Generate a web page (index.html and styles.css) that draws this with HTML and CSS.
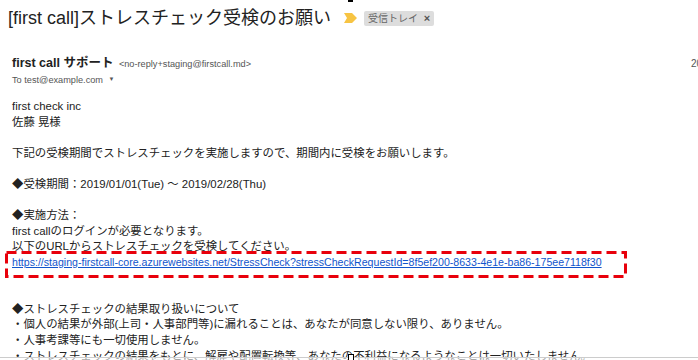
FILE: index.html
```html
<!DOCTYPE html>
<html lang="ja">
<head>
  <meta charset="UTF-8" />
  <title>[first call]ストレスチェック受検のお願い</title>
  <link rel="stylesheet" href="styles.css">
</head>
<body>
  <span class="cursor-top"></span>

  <div class="subject">
    <h1>[first call]ストレスチェック受検のお願い</h1>
    <svg class="marker" width="13" height="10" viewBox="0 0 13 10">
      <polygon points="0,0 8,0 13,5 8,10 0,10 3,5" fill="#f7c443" />
    </svg>
    <span class="label">受信トレイ <b>×</b></span>
  </div>

  <div class="meta">
    <div class="from">
      <span class="name">first call サポート</span>
      <span class="addr">&lt;no-reply+staging@firstcall.md&gt;</span>
    </div>
    <span class="date">2019/01/01 10:00</span>
  </div>
  <div class="to">To test@example.com <span class="caret">▼</span></div>

  <div class="body">
    first check inc<br />
    佐藤 晃様<br />
    <br />
    下記の受検期間でストレスチェックを実施しますので、期間内に受検をお願いします。<br />
    <br />
    ◆受検期間：2019/01/01(Tue) 〜 2019/02/28(Thu)<br />
    <br />
    ◆実施方法：<br />
    first callのログインが必要となります。<br />
    以下のURLからストレスチェックを受検してください。<br />
    <span class="link-line">
      <a href="#">https://staging-firstcall-core.azurewebsites.net/StressCheck?stressCheckRequestId=8f5ef200-8633-4e1e-ba86-175ee7118f30</a>
      <svg class="mark" width="622" height="27" viewBox="0 0 622 27">
        <rect x="1.5" y="1.5" width="619" height="24" fill="none" stroke="#e8000b" stroke-width="3" stroke-dasharray="10 5" />
      </svg>
    </span><br />
    <br />
    <br />
    ◆ストレスチェックの結果取り扱いについて<br />
    ・個人の結果が外部(上司・人事部門等)に漏れることは、あなたが同意しない限り、ありません。<br />
    ・人事考課等にも一切使用しません。<br />
    ・ストレスチェックの結果をもとに、解雇や配置転換等、あなたの不利益になるようなことは一切いたしません。
  </div>

  <div class="fade"></div>
  <span class="cursor-bottom"></span>
</body>
</html>
```

FILE: styles.css
```css
body {
  margin: 0;
  font-family: "Liberation Sans", "Noto Sans CJK JP", sans-serif;
  color: #222;
  background: #fff;
  overflow: hidden;
  height: 360px;
  position: relative;
}
.subject {
  display: flex;
  align-items: center;
  padding: 6px 0 0 8px;
}
h1 {
  margin: 0;
  font-size: 18px;
  font-weight: normal;
  line-height: 24px;
  white-space: nowrap;
}
.marker {
  margin-left: 13px;
}
.label {
  margin-left: 7px;
  background: #ddd;
  color: #666;
  font-size: 10px;
  line-height: 14px;
  padding: 0 4px;
  border-radius: 2px;
}
.label b {
  font-size: 11px;
  margin-left: 3px;
  color: #555;
}
.meta {
  display: flex;
  align-items: baseline;
  margin-top: 22px;
  padding-left: 12px;
  white-space: nowrap;
}
.from {
  width: 679px;
  flex: none;
}
.name {
  font-size: 12.5px;
  font-weight: bold;
  color: #222;
}
.addr {
  font-size: 9.2px;
  color: #555;
  margin-left: 1px;
}
.date {
  font-size: 10px;
  color: #555;
}
.to {
  padding-left: 12px;
  margin-top: 4px;
  font-size: 9.2px;
  color: #555;
}
.caret {
  font-size: 6px;
  margin-left: 3px;
  vertical-align: 2px;
}
.body {
  padding: 14px 0 0 12px;
  font-size: 11.4px;
  line-height: 15.6px;
  white-space: nowrap;
}
.link-line {
  position: relative;
}
.link-line a {
  color: #15c;
  font-size: 10.6px;
  text-decoration: underline;
}
.mark {
  position: absolute;
  left: -7px;
  top: -5px;
}
.fade {
  position: absolute;
  left: 0;
  right: 0;
  bottom: 0;
  height: 2px;
  background: rgba(255, 255, 255, 0.6);
  border-top: 1px solid #ccc;
}
.cursor-top {
  position: absolute;
  left: 348px;
  top: 0;
  width: 5px;
  height: 2px;
  background: #000;
}
.cursor-bottom {
  position: absolute;
  left: 348px;
  top: 354px;
  width: 4px;
  height: 6px;
  border: 1px solid #000;
  background: #fff;
}
```
